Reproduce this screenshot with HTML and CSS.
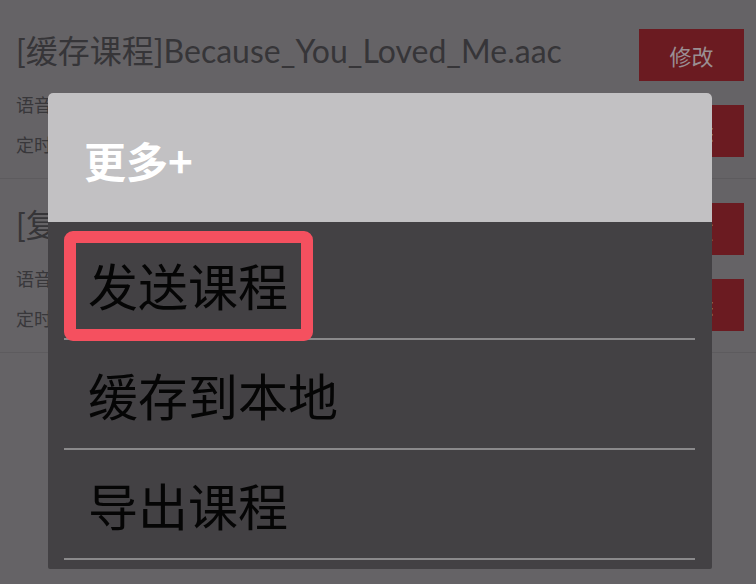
FILE: index.html
```html
<!DOCTYPE html>
<html lang="zh-CN">
<head>
<meta charset="utf-8">
<title>更多</title>
<link rel="stylesheet" href="styles.css">
</head>
<body>
<div class="list">
  <div class="item">
    <div class="info">
      <div class="title">[缓存课程]Because_You_Loved_Me.aac</div>
      <div class="meta">语音</div>
      <div class="meta">定时</div>
    </div>
    <div class="actions">
      <div class="btn">修改</div>
      <div class="btn">删除</div>
    </div>
  </div>
  <div class="item">
    <div class="info">
      <div class="title">[复制课程]Because_You_Loved_Me.aac</div>
      <div class="meta">语音</div>
      <div class="meta">定时</div>
    </div>
    <div class="actions">
      <div class="btn">修改</div>
      <div class="btn">删除</div>
    </div>
  </div>
</div>

<div class="dialog">
  <div class="dialog-head">更多+</div>
  <div class="dialog-body">
    <div class="menu-item">发送课程<span class="mark"></span></div>
    <div class="menu-item">缓存到本地</div>
    <div class="menu-item">导出课程</div>
  </div>
</div>
</body>
</html>
```
FILE: styles.css
```css
html, body {
  margin: 0;
  padding: 0;
}
body {
  width: 756px;
  height: 584px;
  overflow: hidden;
  background: #656366;
  font-family: "Noto Sans", "Noto Sans CJK SC", sans-serif;
  position: relative;
}
.list {
  padding-top: 5px;
}
.item {
  display: flex;
  justify-content: space-between;
  height: 174px;
  box-sizing: border-box;
  padding: 24px 12px 0 16px;
  border-bottom: 1px solid #5d5b5e;
}
.info {
  display: flex;
  flex-direction: column;
  min-width: 0;
}
.title {
  margin-top: 2px;
  font-family: "Lato", "Noto Sans CJK SC", sans-serif;
  font-size: 32px;
  line-height: 40px;
  color: #363538;
  white-space: nowrap;
}
.meta {
  font-family: "Noto Sans CJK SC", sans-serif;
  font-size: 18px;
  line-height: 40px;
  color: #38373a;
}
.title + .meta {
  margin-top: 13px;
}
.actions {
  display: flex;
  flex-direction: column;
  gap: 24px;
  flex-shrink: 0;
}
.btn {
  width: 105px;
  height: 52px;
  background: #6b1b21;
  color: #9a8f93;
  font-family: "Noto Sans CJK SC", sans-serif;
  font-size: 22px;
  display: flex;
  align-items: center;
  justify-content: center;
}

.dialog {
  position: absolute;
  left: 48px;
  top: 93px;
  width: 664px;
  border-radius: 5px 5px 2px 2px;
  overflow: hidden;
  background: #434144;
}
.dialog-head {
  height: 129px;
  box-sizing: border-box;
  background: #c2c1c3;
  color: #ffffff;
  font-family: "Noto Sans CJK SC", sans-serif;
  font-weight: 700;
  font-size: 42px;
  display: flex;
  align-items: center;
  padding: 4px 0 0 36px;
}
.dialog-body {
  padding: 8px 17px 9px 16px;
}
.menu-item {
  position: relative;
  height: 108px;
  border-bottom: 2px solid #8a898b;
  display: flex;
  align-items: center;
  padding-left: 24px;
  font-family: "Noto Sans CJK SC", sans-serif;
  font-size: 50px;
  line-height: 1;
  color: #050505;
}
.mark {
  position: absolute;
  left: 0;
  top: 1px;
  width: 249px;
  height: 110px;
  box-sizing: border-box;
  border: 12px solid #f5505f;
  border-radius: 9px;
}
```
